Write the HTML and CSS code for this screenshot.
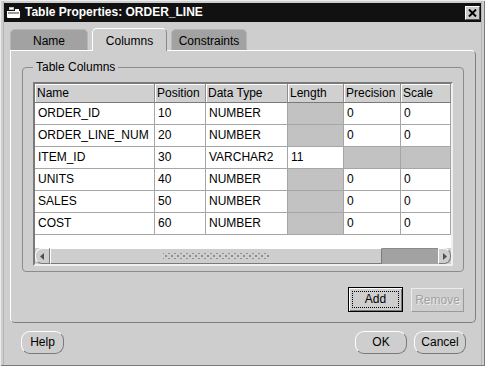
FILE: index.html
```html
<!DOCTYPE html>
<html>
<head>
<meta charset="utf-8">
<title>Table Properties: ORDER_LINE</title>
<link rel="stylesheet" href="styles.css">
</head>
<body>
<div class="window">
  <div class="titlebar">
    <svg class="app-icon" width="15" height="12" viewBox="0 0 15 12">
      <rect x="3" y="0" width="5" height="3" fill="#bdbdbd"/>
      <rect x="4" y="1" width="3" height="1" fill="#ffffff"/>
      <path d="M1 4 H14 V10 Q14 11 13 11 H2 Q1 11 1 10 Z" fill="#ffffff"/>
      <rect x="2" y="5" width="11" height="2" fill="#9a9a9a"/>
      <rect x="9" y="2" width="4" height="2" fill="#ffffff"/>
    </svg>
    <span class="title">Table Properties: ORDER_LINE</span>
    <span class="close">
      <svg width="9" height="8" viewBox="0 0 9 8"><path d="M1 0.5 L8 7.5 M8 0.5 L1 7.5" stroke="#000" stroke-width="2"/></svg>
    </span>
  </div>
  <div class="client">
    <div class="tabs">
      <div class="tab tab-name">Name</div>
      <div class="tab tab-columns active">Columns</div>
      <div class="tab tab-constraints">Constraints</div>
    </div>
    <div class="panel">
      <fieldset class="group">
        <legend>Table Columns</legend>
        <div class="grid-wrap">
          <div class="cols">
            <div class="hd">Name</div><div class="hd">Position</div><div class="hd">Data Type</div><div class="hd">Length</div><div class="hd">Precision</div><div class="hd">Scale</div>

            <div class="c">ORDER_ID</div><div class="c">10</div><div class="c">NUMBER</div><div class="c na"></div><div class="c">0</div><div class="c">0</div>
            <div class="c">ORDER_LINE_NUM</div><div class="c">20</div><div class="c">NUMBER</div><div class="c na"></div><div class="c">0</div><div class="c">0</div>
            <div class="c">ITEM_ID</div><div class="c">30</div><div class="c">VARCHAR2</div><div class="c">11</div><div class="c na"></div><div class="c na"></div>
            <div class="c">UNITS</div><div class="c">40</div><div class="c">NUMBER</div><div class="c na"></div><div class="c">0</div><div class="c">0</div>
            <div class="c">SALES</div><div class="c">50</div><div class="c">NUMBER</div><div class="c na"></div><div class="c">0</div><div class="c">0</div>
            <div class="c">COST</div><div class="c">60</div><div class="c">NUMBER</div><div class="c na"></div><div class="c">0</div><div class="c">0</div>
          </div>
          <div class="blank"></div>
          <div class="hscroll">
            <div class="sb-btn sb-left"><svg width="5" height="7" viewBox="0 0 5 7"><path d="M4 0 L0 3.5 L4 7 Z" fill="#505050"/></svg></div>
            <div class="sb-thumb"><div class="grip"></div></div>
            <div class="sb-track"></div>
            <div class="sb-btn sb-right"><svg width="5" height="7" viewBox="0 0 5 7"><path d="M1 0 L5 3.5 L1 7 Z" fill="#505050"/></svg></div>
          </div>
        </div>
      </fieldset>
      <div class="actions">
        <button class="btn btn-add"><span class="focus">Add</span></button>
        <button class="btn btn-remove" disabled>Remove</button>
      </div>
    </div>
    <div class="footer">
      <button class="pill pill-help">Help</button>
      <div class="spacer"></div>
      <button class="pill pill-ok">OK</button>
      <button class="pill pill-cancel">Cancel</button>
    </div>
  </div>
</div>
</body>
</html>
```
FILE: styles.css
```css
html, body {
  margin: 0;
  padding: 0;
  background: #cecece;
}
body {
  font-family: "Liberation Sans", Arial, sans-serif;
  font-size: 12px;
  color: #000;
}
.window {
  width: 485px;
  height: 366px;
  box-sizing: border-box;
  padding: 3px 4px 0 4px;
  background: #cecece;
  box-shadow: inset 1px 1px 0 #ececec, inset -1px -1px 0 #7a7a7a, inset 3px 0 0 #cecece, inset 4px 0 0 #b4b4b4, inset -3px 0 0 #cecece, inset -4px 0 0 #b4b4b4;
}
.titlebar {
  height: 19px;
  background: #111111;
  display: flex;
  align-items: center;
  padding: 0 1px 0 2px;
  color: #fff;
  font-weight: bold;
}
.app-icon {
  display: block;
  margin-right: 4px;
}
.title {
  flex: 1;
  line-height: 19px;
  white-space: nowrap;
}
.close {
  width: 15px;
  height: 14px;
  box-sizing: border-box;
  background: #cacaca;
  border: 1px solid;
  border-color: #ffffff #505050 #505050 #ffffff;
  display: flex;
  align-items: center;
  justify-content: center;
}
.close svg { display: block; }

.client {
  padding: 6px 5px 0 6px;
}
.tabs {
  display: flex;
  align-items: flex-end;
  gap: 4px;
  height: 22px;
}
.tab {
  box-sizing: border-box;
  height: 21px;
  padding-top: 2px;
  line-height: 18px;
  text-align: center;
  background: #a2a2a2;
  border: 1px solid #b6b6b6;
  border-bottom: none;
  border-radius: 5px 5px 0 0;
}
.tab-name { width: 78px; }
.tab-columns { width: 75px; }
.tab-constraints { width: 76px; }
.tab.active {
  height: 23px;
  padding-top: 3px;
  background: #cecece;
  border-color: #ffffff #8a8a8a #8a8a8a #ffffff;
  margin-bottom: -1px;
  position: relative;
  z-index: 1;
}

.panel {
  box-sizing: border-box;
  height: 273px;
  border: 1px solid;
  border-color: #ffffff #7e7e7e #7e7e7e #ffffff;
  border-radius: 0 5px 5px 5px;
  padding: 10px 11px 0 11px;
  display: flex;
  flex-direction: column;
}
.group {
  margin: 0;
  padding: 9px 10px 5px 10px;
  border: 1px solid #8c8c8c;
  border-radius: 4px;
  min-width: 0;
}
.group legend {
  padding: 0 3px;
  line-height: 12px;
}
.grid-wrap {
  height: 184px;
  box-sizing: border-box;
  border: 2px solid;
  border-color: #7a7a7a #f0f0f0 #f0f0f0 #7a7a7a;
  background: #ffffff;
  display: flex;
  flex-direction: column;
}
.cols {
  display: grid;
  grid-template-columns: 120px 51px 82px 56px 57px 50px;
}
.hd {
  height: 19px;
  box-sizing: border-box;
  line-height: 18px;
  padding-left: 2px;
  background: #d0d0d0;
  border-right: 1px solid #8e8e8e;
  border-bottom: 1px solid #7a7a7a;
  box-shadow: inset 1px 1px 0 #ffffff;
  white-space: nowrap;
  overflow: hidden;
}
.c {
  height: 22px;
  box-sizing: border-box;
  line-height: 21px;
  padding-left: 3px;
  border-right: 1px solid #a6a6a6;
  border-bottom: 1px solid #a6a6a6;
  white-space: nowrap;
  overflow: hidden;
}
.c.na { background: #c2c2c2; }
.blank { flex: 1; }
.hscroll {
  height: 16px;
  display: flex;
  background: #cecece;
}
.sb-btn {
  box-sizing: border-box;
  width: 15px;
  border: 1px solid;
  border-color: #ffffff #7a7a7a #7a7a7a #ffffff;
  display: flex;
  align-items: center;
  justify-content: center;
}
.sb-btn svg { display: block; }
.sb-left { border-radius: 7px 0 0 7px; }
.sb-right { width: 13px; border-radius: 0 7px 7px 0; }
.sb-thumb {
  width: 332px;
  box-sizing: border-box;
  border: 1px solid;
  border-color: #ffffff #7a7a7a #7a7a7a #ffffff;
  display: flex;
  align-items: center;
  justify-content: center;
}
.grip {
  width: 106px;
  height: 6px;
  background:
    radial-gradient(circle, #8e8e8e 0.8px, transparent 1.1px) 0 0 / 6px 6px,
    radial-gradient(circle, #8e8e8e 0.8px, transparent 1.1px) 3px 3px / 6px 6px;
}
.sb-track {
  flex: 1;
  background: #a2a2a2;
  border-top: 1px solid #8a8a8a;
}

.actions {
  display: flex;
  justify-content: flex-end;
  align-items: flex-start;
  gap: 8px;
  margin-top: 15px;
}
.btn {
  font: inherit;
  margin: 0;
  padding: 0;
  box-sizing: border-box;
  background: #cecece;
  color: #000;
}
.btn-add {
  width: 55px;
  height: 25px;
  border: 1px solid #000;
  box-shadow: inset 1px 1px 0 #ffffff, inset -1px -1px 0 #7a7a7a;
  display: flex;
  align-items: center;
  justify-content: center;
}
.focus {
  display: block;
  width: 47px;
  height: 17px;
  box-sizing: border-box;
  border: 1px dotted #000;
  line-height: 15px;
  text-align: center;
}
.btn-remove {
  width: 53px;
  height: 24px;
  margin-top: 1px;
  border: 1px solid;
  border-color: #ececec #9a9a9a #9a9a9a #ececec;
  color: #a2a2a2;
  text-shadow: 1px 1px 0 #ececec;
  line-height: 22px;
}

.footer {
  display: flex;
  align-items: center;
  gap: 7px;
  margin-top: 8px;
  padding: 0 10px 0 11px;
}
.spacer { flex: 1; }
.pill {
  font: inherit;
  color: #000;
  margin: 0;
  padding: 0;
  height: 23px;
  box-sizing: border-box;
  background: #cecece;
  border: 1px solid;
  border-color: #ffffff #7a7a7a #7a7a7a #ffffff;
  border-radius: 9px;
  line-height: 21px;
}
.pill-help { width: 43px; }
.pill-ok { width: 52px; }
.pill-cancel { width: 52px; }
```
